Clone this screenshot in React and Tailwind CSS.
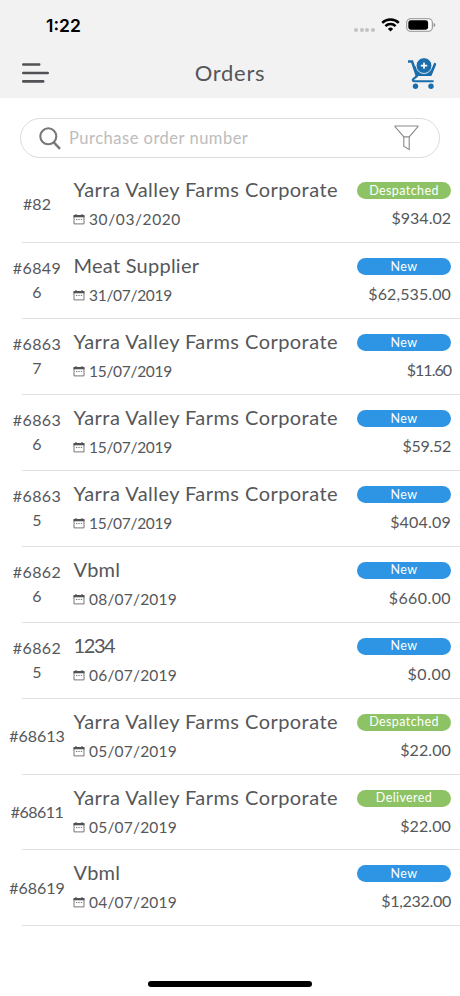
import React from "react";

const orders = [
  { id: ["#82"], name: "Yarra Valley Farms Corporate", nameCls: "tracking-[0.45px]", date: "30/03/2020", dateCls: "tracking-[0.6px]", status: "Despatched", total: "$934.02", totalCls: "tracking-[0px]" },
  { id: ["#6849", "6"], name: "Meat Supplier", nameCls: "tracking-[0.25px]", date: "31/07/2019", dateCls: "tracking-[-0.3px]", status: "New", total: "$62,535.00", totalCls: "tracking-[0.1px]" },
  { id: ["#6863", "7"], name: "Yarra Valley Farms Corporate", nameCls: "tracking-[0.45px]", date: "15/07/2019", dateCls: "tracking-[-0.3px]", status: "New", total: "$11.60", totalCls: "tracking-[-1px]" },
  { id: ["#6863", "6"], name: "Yarra Valley Farms Corporate", nameCls: "tracking-[0.45px]", date: "15/07/2019", dateCls: "tracking-[-0.3px]", status: "New", total: "$59.52", totalCls: "tracking-[-0.3px]" },
  { id: ["#6863", "5"], name: "Yarra Valley Farms Corporate", nameCls: "tracking-[0.45px]", date: "15/07/2019", dateCls: "tracking-[-0.3px]", status: "New", total: "$404.09", totalCls: "tracking-[0.2px]" },
  { id: ["#6862", "6"], name: "Vbml", nameCls: "tracking-[0.2px]", date: "08/07/2019", dateCls: "tracking-[0.2px]", status: "New", total: "$660.00", totalCls: "tracking-[0.4px]" },
  { id: ["#6862", "5"], name: "1234", nameCls: "tracking-[-1.4px]", date: "06/07/2019", dateCls: "tracking-[0.2px]", status: "New", total: "$0.00", totalCls: "tracking-[0.5px]" },
  { id: ["#68613"], name: "Yarra Valley Farms Corporate", nameCls: "tracking-[0.45px]", date: "05/07/2019", dateCls: "tracking-[0.2px]", status: "Despatched", total: "$22.00", totalCls: "tracking-[0.1px]" },
  { id: ["#68611"], name: "Yarra Valley Farms Corporate", nameCls: "tracking-[0.45px]", date: "05/07/2019", dateCls: "tracking-[0.2px]", status: "Delivered", total: "$22.00", totalCls: "tracking-[0.1px]" },
  { id: ["#68619"], name: "Vbml", nameCls: "tracking-[0.2px]", date: "04/07/2019", dateCls: "tracking-[0.2px]", status: "New", total: "$1,232.00", totalCls: "tracking-[-0.3px]" },
];

const StatusBar = () => (
  <div className="flex h-[50px] items-center justify-between pl-[46px] pr-[24px] text-black">
    <span className="pt-[1px] font-['Inter',sans-serif] text-[17.5px] font-semibold leading-none">1:22</span>
    <div className="flex items-center">
      <div className="mr-[6px] mt-[9px] flex gap-[1.7px]">
        {[0, 1, 2, 3].map((i) => (
          <span key={i} className="size-[4px] rounded-full bg-[#c2c2c2]" />
        ))}
      </div>
      <svg width="19" height="14" viewBox="0 0 19 14" fill="none" stroke="currentColor" strokeWidth="2.5">
        <path d="M1.2 4.9a11.8 11.8 0 0 1 16.6 0" />
        <path d="M4.4 8.1a7.2 7.2 0 0 1 10.2 0" />
        <path d="M9.5 13.5 6.9 10.9a3.7 3.7 0 0 1 5.2 0Z" fill="currentColor" stroke="none" />
      </svg>
      <svg className="ml-[6px]" width="30" height="14" viewBox="0 0 30 14">
        <rect x=".7" y=".7" width="25.6" height="12.6" rx="3.8" fill="#fff" stroke="#8f8f8f" strokeWidth="1.1" />
        <rect x="2.3" y="2.3" width="19.8" height="9.4" rx="2.4" fill="#000" />
        <path d="M27.6 4.8c2.2.8 2.2 3.6 0 4.4Z" fill="#8f8f8f" />
      </svg>
    </div>
  </div>
);

const CartIcon = () => (
  <svg className="mb-[3px]" width="30" height="32" viewBox="0 0 30 32" fill="none" stroke="#1b6dac">
    <path d="M1 4.6h4.1L9.9 19" strokeWidth="2.5" />
    <path d="M27.9 7.2 23.6 17.6" strokeWidth="2.6" strokeLinecap="round" />
    <path d="M6.8 9.2h2.4l3 4.5 4.8 2 5.2-2 3-3.5h2.4l-3.7 8.9H10Z" fill="#1b6dac" stroke="none" />
    <path d="M10.5 18.6 6.5 21.9c-1.4 1.2-.7 2.4 1.2 2.4h18.9" strokeWidth="2.1" />
    <circle cx="17" cy="8.6" r="7.9" fill="#1b6dac" stroke="#f2f2f2" strokeWidth=".9" />
    <path d="M17 5.4v6.4M13.8 8.6h6.4" stroke="#fff" strokeWidth="1.6" />
    <circle cx="8.5" cy="29.2" r="2.7" fill="#1b6dac" stroke="none" />
    <circle cx="24" cy="29.2" r="2.7" fill="#1b6dac" stroke="none" />
  </svg>
);

const CalendarIcon = () => (
  <svg width="12" height="12" viewBox="0 0 12 12" fill="none">
    <path d="M1 2.5h10v8.4H1Z" stroke="#666" strokeWidth=".9" />
    <path d="M.6 2h10.8v2.3H.6Z" fill="#505255" />
    <path d="M3 .9v2M9 .9v2" stroke="#505255" strokeWidth="1.1" />
    <path d="M3 6.5h1.3M5.4 6.5h1.3M7.8 6.5h1.3" stroke="#777" strokeWidth="1" />
  </svg>
);

const Header = () => (
  <div className="flex h-12 items-center justify-between pl-[22px] pr-[23px]">
    <svg className="mb-[2px]" width="27" height="20" viewBox="0 0 27 20" stroke="#505255" strokeWidth="2.6" strokeLinecap="round">
      <path d="M1.3 1.5h15.9M1.3 10h24.4M1.3 18.4h19.9" />
    </svg>
    <h1 className="mb-[3px] ml-[4px] text-[22px] leading-none tracking-[0.7px]">Orders</h1>
    <CartIcon />
  </div>
);

const SearchBar = () => (
  <div className="mx-[20px] mt-[20px] flex h-10 items-center rounded-full border border-[#dcdcdc] pl-[17.5px] pr-[20px]">
    <svg width="22" height="23" viewBox="0 0 22 23" fill="none" stroke="#77787a" strokeWidth="2.1">
      <circle cx="9.3" cy="9.3" r="8" />
      <path d="m14.8 15.4 6.2 6.4" strokeWidth="2.5" />
    </svg>
    <span className="ml-[8.5px] flex-1 pt-[1px] text-[16.5px] tracking-[0.5px] text-[#bcbcbc]">Purchase order number</span>
    <svg width="25" height="26" viewBox="0 0 25 26" fill="none" stroke="#88898b" strokeWidth="1.1">
      <path d="M1 1.6V1h23v.6l-8.8 10.3H9.8L1 1.6Z" />
      <path d="M9.8 11.9v9.4l5.4 3.3V11.9" />
    </svg>
  </div>
);

const OrderRow = ({ order }) => (
  <li className="flex h-[75.95px]">
    <div className="flex w-[73px] shrink-0 flex-col items-center justify-center pb-[1px] pl-[1px] text-[16px] leading-[24px]">
      {order.id.map((part, i) => (
        <span key={i} className={order.id[0] === "#68611" ? "tracking-[-0.5px]" : order.id.length > 1 ? "tracking-[0.4px]" : "tracking-[0px]"}>{part}</span>
      ))}
    </div>
    <div className="min-w-0 flex-1 pt-[8px]">
      <div className={`ml-[0.5px] whitespace-nowrap text-[20px] leading-[28px] ${order.nameCls}`}>{order.name}</div>
      <div className="mt-[4px] flex items-center gap-[4px] text-[15.5px] leading-[24px]">
        <CalendarIcon />
        <span className={order.dateCls}>{order.date}</span>
      </div>
    </div>
    <div className="mr-[9px] flex w-[94px] shrink-0 flex-col items-end pt-[15px]">
      <div className={`flex h-[17px] w-full items-center justify-center rounded-full pt-[1px] text-[12.5px] leading-none tracking-[0.4px] text-white ${order.status === "New" ? "bg-[#2e95e5]" : "bg-[#8dc364]"}`}>
        {order.status}
      </div>
      <span className={`mt-[7px] text-[16px] leading-[24px] ${order.totalCls}`}>{order.total}</span>
    </div>
  </li>
);

export default function App() {
  return (
    <div className="flex h-[996px] w-[460px] flex-col overflow-hidden bg-white font-['Lato',sans-serif] text-[#55575a]">
      <header className="h-[98px] bg-[#f2f2f2]">
        <StatusBar />
        <Header />
      </header>
      <SearchBar />
      <ul className="mt-[9px] flex-1">
        {orders.map((order, i) => (
          <React.Fragment key={i}>
            <OrderRow order={order} />
            <li className="-mt-px ml-[22px] h-px bg-[#e1e1e1]" />
          </React.Fragment>
        ))}
      </ul>
      <div className="mx-auto mb-[9px] h-[6px] w-[164px] rounded-full bg-black" />
    </div>
  );
}
